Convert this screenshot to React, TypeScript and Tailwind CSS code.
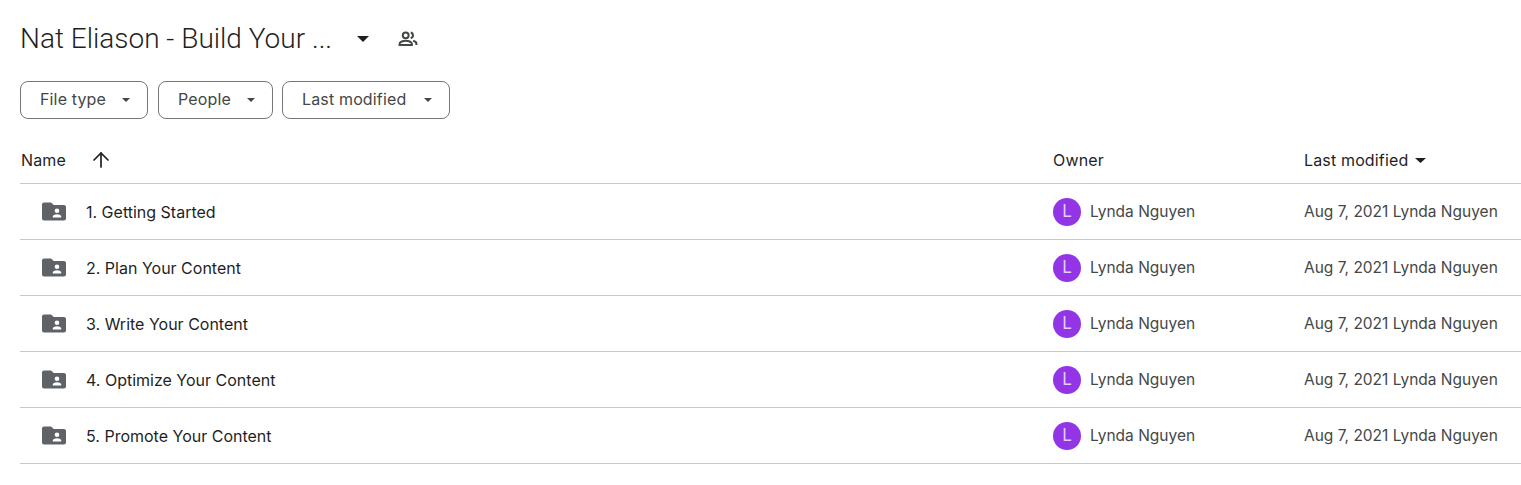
import React from 'react';
import { ArrowUp } from 'lucide-react';

const rows = ['1. Getting Started', '2. Plan Your Content', '3. Write Your Content', '4. Optimize Your Content', '5. Promote Your Content'];

const Caret = ({ className }: { className: string }) => (
    <svg viewBox="0 0 10 5" className={className} fill="currentColor" preserveAspectRatio="none"><path d="M0 0h10L5 5z" /></svg>
);

const SharedFolder = () => (
    <svg viewBox="0 0 24 24" className="w-6 h-6 text-[#5f6368]" fill="currentColor">
        <path d="M2 2.500h7.200l2.400 2.400H22c1.100 0 2 .9 2 2v11.600c0 1.100-.9 2-2 2H2c-1.100 0-2-.9-2-2V4.500c0-1.100.9-2 2-2z" />
        <circle cx="15" cy="10.800" r="2.300" fill="#fff" />
        <path d="M10.800 17.600v-1.100c0-1.400 2.800-2.300 4.200-2.300s4.200.9 4.200 2.300v1.100z" fill="#fff" />
    </svg>
);

const Chip = ({ label, width }: { label: string; width: string }) => (
    <div className={`h-[38px] ${width} border border-[#747775] rounded-lg flex items-center justify-between pl-[19px] pr-[17px] text-[16px] tracking-[0.15px] text-[#444746]`}>
        <span className="-mt-[2px]">{label}</span>
        <Caret className="w-2 h-1 text-[#444746]" />
    </div>
);

export default function App() {
    return (
        <div className="h-[485px] w-full bg-white overflow-hidden pl-5 font-['Inter',sans-serif]">
            <div className="h-[78px] flex items-center">
                <h1 className="text-[28px] font-light font-['Roboto',sans-serif] leading-9 text-[#1f1f1f] w-[337px]">Nat Eliason - Build Your ...</h1>
                <Caret className="w-3 h-[6px] text-[#1f1f1f]" />
                <svg viewBox="0 0 24 24" className="w-[22px] h-[22px] ml-[28px] text-[#444746]" fill="none" stroke="currentColor" strokeWidth="2.200">
                    <circle cx="9.500" cy="8" r="3.200" />
                    <path d="M2.800 18.500v-1.300c0-2 4-3.400 6.700-3.400s6.700 1.400 6.700 3.400v1.300z" />
                    <path d="M15 4.900a3.200 3.200 0 0 1 0 6.200M17.600 14c2 .5 3.600 1.500 3.600 3.200v1.300" />
                </svg>
            </div>
            <div className="flex h-[38px] mt-[3px]">
                <Chip label="File type" width="w-[128px]" />
                <div className="w-[10px]" />
                <Chip label="People" width="w-[115px]" />
                <div className="w-[9px]" />
                <Chip label="Last modified" width="w-[168px]" />
            </div>
            <div className="h-[65px] flex items-end border-b border-[#c7c7c7] text-[16px] tracking-[0.15px] text-[#1f1f1f]">
                <div className="h-[46px] flex items-center w-[1033px] pl-[1px]">
                    <span className="w-[68px]">Name</span>
                    <ArrowUp size={24} strokeWidth={1.700} className="text-[#1f1f1f] -mt-[1px]" />
                </div>
                <div className="h-[46px] flex items-center w-[251px]">Owner</div>
                <div className="h-[46px] flex items-center gap-[7px]">
                    <span>Last modified</span>
                    <Caret className="w-[11px] h-[5px] text-[#1f1f1f]" />
                </div>
            </div>
            {rows.map(name => (
                <div key={name} className="h-[56px] flex items-center border-b border-[#c7c7c7]">
                    <div className="w-[1033px] flex items-center pl-[22px]">
                        <SharedFolder />
                        <span className="ml-5 text-[16px] text-[#1f1f1f]">{name}</span>
                    </div>
                    <div className="w-[251px] flex items-center text-[15.500px] text-[#444746]">
                        <div className="w-7 h-7 rounded-full bg-[#9334e6] text-[#e4cdf9] flex items-center justify-center text-[17px]">L</div>
                        <span className="ml-[9px]">Lynda Nguyen</span>
                    </div>
                    <div className="text-[15.500px] text-[#444746] whitespace-nowrap">Aug 7, 2021 Lynda Nguyen</div>
                </div>
            ))}
        </div>
    );
}
